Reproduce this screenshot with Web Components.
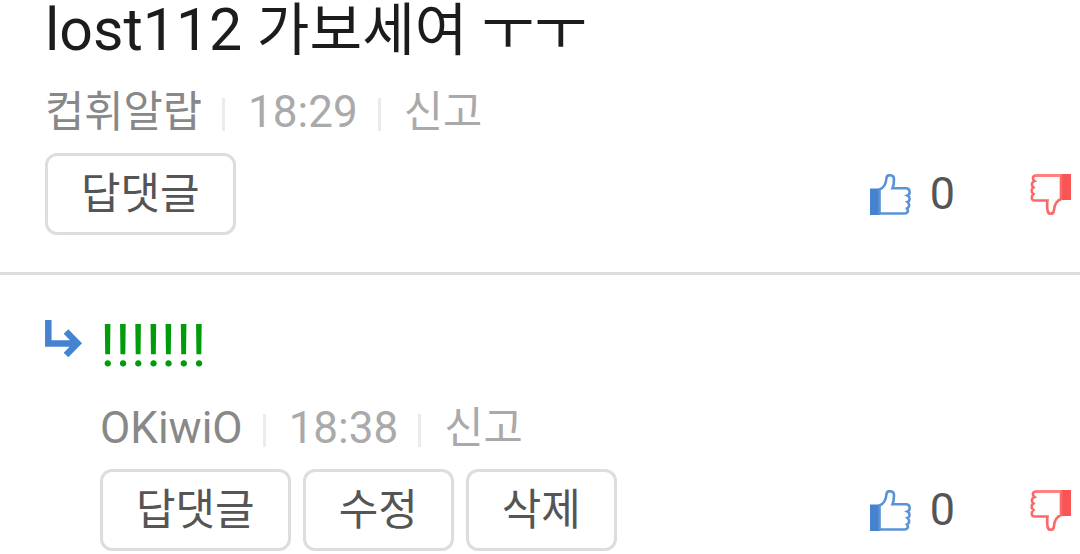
<!DOCTYPE html>
<html lang="ko">
<head>
<meta charset="utf-8">
<meta name="viewport" content="width=device-width, initial-scale=1">
<title>댓글</title>
<style>
  body { margin: 0; background: #fff; font-family: Roboto, "Noto Sans CJK KR", sans-serif; }
</style>
</head>
<body>
<comment-list>
  <comment-item>
    <span slot="text">lost112 <comment-hangul>가보세여 ㅜㅜ</comment-hangul></span>
    <comment-meta slot="meta" time="18:29"><comment-hangul>컵휘알랍</comment-hangul></comment-meta>
    <comment-button slot="actions">답댓글</comment-button>
    <vote-box slot="votes" count="0"></vote-box>
  </comment-item>
  <comment-item reply>
    <span slot="text">!!!!!!!</span>
    <comment-meta slot="meta" time="18:38">OKiwiO</comment-meta>
    <comment-button slot="actions">답댓글</comment-button>
    <comment-button slot="actions">수정</comment-button>
    <comment-button slot="actions">삭제</comment-button>
    <vote-box slot="votes" count="0"></vote-box>
  </comment-item>
</comment-list>
<script>
  const define = (name, html, setup) => {
    const template = document.createElement('template');
    template.innerHTML = html;
    customElements.define(name, class extends HTMLElement {
      constructor() {
        super();
        this.attachShadow({ mode: 'open' }).append(template.content.cloneNode(true));
      }
      connectedCallback() { if (setup) setup(this, this.shadowRoot); }
    });
  };

  define('comment-list', `
    <style>:host { display: block; }</style>
    <slot></slot>`);

  /* Hangul set a little smaller than the Latin text beside it */
  define('comment-hangul', `
    <style>:host { display: inline; font-size: 0.97em; }</style>
    <slot></slot>`);

  define('comment-item', `
    <style>
      :host { display: flex; padding: 0 9px 37px 45px; border-bottom: 3px solid #ddd; }
      :host([reply]) { padding-top: 41px; padding-bottom: 0; border-bottom: 0; }
      .arrow { display: none; flex: none; width: 37px; height: 37px; margin: 4px 18px 0 0; }
      :host([reply]) .arrow { display: block; }
      .body { flex: 1; min-width: 0; }
      .text { margin: 0; font-size: 59px; line-height: 60px; font-weight: 400; color: #1c1c1c; }
      :host([reply]) .text { color: #009c0b; }
      .meta { margin-top: 24px; }
      :host([reply]) .meta { margin-top: 25px; }
      .foot { display: flex; justify-content: space-between; align-items: center; margin-top: 14px; }
      .actions { display: flex; gap: 12px; }
    </style>
    <svg class="arrow" viewBox="0 0 37 37" fill="none" stroke="#4583d1" stroke-width="6.5" aria-hidden="true">
      <path d="M3.3 0V23.5H32M21 11.5L32.5 23.2L21 35"/>
    </svg>
    <div class="body">
      <p class="text"><slot name="text"></slot></p>
      <div class="meta"><slot name="meta"></slot></div>
      <div class="foot">
        <div class="actions"><slot name="actions"></slot></div>
        <slot name="votes"></slot>
      </div>
    </div>`);

  define('comment-meta', `
    <style>
      :host { display: flex; align-items: center; height: 54px; font-size: 44px; line-height: 54px; color: #aaa; white-space: nowrap; }
      .name { color: #888; }
      .bar { width: 3px; height: 33px; margin: 4px 23px 0 20px; background: #ebebeb; }
      a { color: inherit; text-decoration: none; }
    </style>
    <span class="name"><slot></slot></span>
    <span class="bar"></span>
    <time></time>
    <span class="bar"></span>
    <a href="#report"><comment-hangul>신고</comment-hangul></a>`,
    (host, root) => { root.querySelector('time').textContent = host.getAttribute('time'); });

  define('comment-button', `
    <style>
      :host { display: block; }
      button { display: block; height: 82px; margin: 0; padding: 0 33px; border: 3px solid #ddd; border-radius: 12px;
        background: #fff; color: #555; font: inherit; font-size: 43px; line-height: 72px; white-space: nowrap; }
    </style>
    <button type="button"><slot></slot></button>`);

  define('vote-box', `
    <style>
      :host { display: flex; align-items: center; font-size: 45px; line-height: 54px; color: #555; }
      button { display: block; margin: 0; padding: 0; border: 0; background: none; }
      svg { display: block; width: 41px; height: 41px; }
      .count { margin: 0 75px 0 19px; }
    </style>
    <button type="button" aria-label="추천">
      <svg viewBox="0 0 41 41">
        <path d="M0 14.5H10V41H0Z" fill="#4583d1"/>
        <path d="M9.500 15.500C13.500 14 16 9.500 16.500 4C17 0 24 .5 24 5C24 9 23.500 12 22.500 14.200H36C40.500 14.200 40.500 20.500 37.500 21.500C40.500 23 40 27 37.500 28C40 30 39.500 33.500 37 34.500C39 37 37.500 39.500 34.500 39.500H9.500Z" fill="#fefefe" stroke="#5a92d8" stroke-width="2.600"/>
      </svg>
    </button>
    <span class="count"></span>
    <button type="button" aria-label="비추천">
      <svg viewBox="0 0 41 41">
        <path d="M31 0H41V26H31Z" fill="#fa5555"/>
        <path d="M31 1.500H6C2.500 1.500 2 5 4.500 7C1.500 8 1 11.500 3.500 13.500C1 15 1 18.500 3.500 20C1 22 1 26.500 4.500 26.500H17.500C17 30 17 33 17.500 36C18 41 23.500 41 24 36C24.500 31 27 26.500 31 25Z" fill="#fefefe" stroke="#fb6868" stroke-width="2.600"/>
        <path d="M5 1.500H31" stroke="#ff8080" stroke-width="3"/>
      </svg>
    </button>`,
    (host, root) => { root.querySelector('.count').textContent = host.getAttribute('count'); });
</script>
</body>
</html>
